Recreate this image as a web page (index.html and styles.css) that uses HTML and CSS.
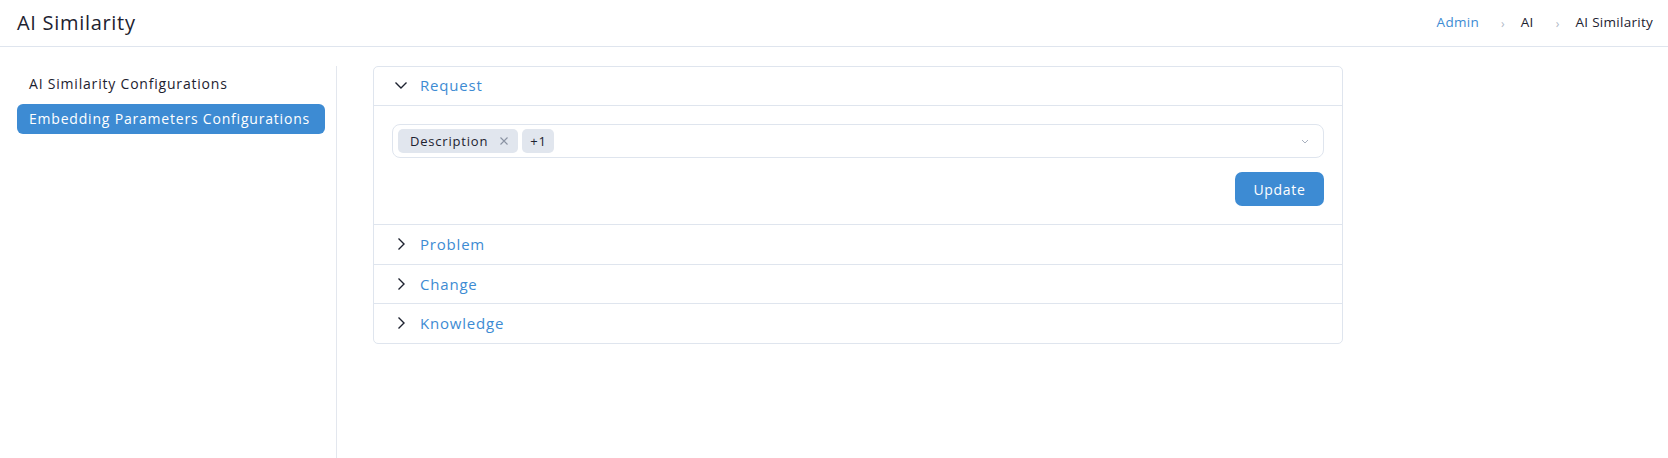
FILE: index.html
```html
<!DOCTYPE html>
<html>
<head>
<meta charset="utf-8">
<link rel="stylesheet" href="styles.css">
</head>
<body>
<header class="topbar">
  <h1 class="title">AI Similarity</h1>
  <nav class="crumbs">
    <a class="crumb link">Admin</a>
    <span class="sep">›</span>
    <span class="crumb">AI</span>
    <span class="sep">›</span>
    <span class="crumb">AI Similarity</span>
  </nav>
</header>
<div class="main">
  <aside class="side">
    <div class="side-item">AI Similarity Configurations</div>
    <div class="side-item active">Embedding Parameters Configurations</div>
  </aside>
  <section class="content">
    <div class="accordion">
      <div class="acc-item open">
        <div class="acc-head">
          <svg class="chev" width="14" height="14" viewBox="0 0 14 14"><path d="M1.5 4.5 L7 10 L12.5 4.5" fill="none" stroke="#1d2230" stroke-width="1.4"/></svg>
          <span class="acc-title">Request</span>
        </div>
        <div class="acc-body">
          <div class="select">
            <span class="tag">Description <svg class="x" width="10" height="10" viewBox="0 0 10 10"><path d="M1.5 1.5 L8.5 8.5 M8.5 1.5 L1.5 8.5" stroke="#8a93a3" stroke-width="1.1"/></svg></span>
            <span class="tag count">+1</span>
            <svg class="dd" width="10" height="10" viewBox="0 0 10 10"><path d="M2 4 L5 7 L8 4" fill="none" stroke="#a9b1bf" stroke-width="1"/></svg>
          </div>
          <div class="actions"><button class="btn">Update</button></div>
        </div>
      </div>
      <div class="acc-item">
        <div class="acc-head">
          <svg class="chev" width="14" height="14" viewBox="0 0 14 14"><path d="M4.5 1.5 L10 7 L4.5 12.5" fill="none" stroke="#1d2230" stroke-width="1.4"/></svg>
          <span class="acc-title">Problem</span>
        </div>
      </div>
      <div class="acc-item">
        <div class="acc-head">
          <svg class="chev" width="14" height="14" viewBox="0 0 14 14"><path d="M4.5 1.5 L10 7 L4.5 12.5" fill="none" stroke="#1d2230" stroke-width="1.4"/></svg>
          <span class="acc-title">Change</span>
        </div>
      </div>
      <div class="acc-item">
        <div class="acc-head">
          <svg class="chev" width="14" height="14" viewBox="0 0 14 14"><path d="M4.5 1.5 L10 7 L4.5 12.5" fill="none" stroke="#1d2230" stroke-width="1.4"/></svg>
          <span class="acc-title">Knowledge</span>
        </div>
      </div>
    </div>
  </section>
</div>
</body>
</html>
```
FILE: styles.css
```css
* { box-sizing: border-box; }
html, body { margin: 0; padding: 0; height: 100%; }
body {
  font-family: "Open Sans", "Liberation Sans", sans-serif;
  letter-spacing: 0.05em;
  color: #1d2230;
  background: #fff;
  display: flex;
  flex-direction: column;
}
.topbar {
  height: 47px;
  border-bottom: 1px solid #dfe5ee;
  display: flex;
  align-items: center;
  justify-content: space-between;
  padding: 0 15px 0 17px;
  flex: none;
}
.title {
  margin: 0 0 2px 0;
  font-size: 20px;
  font-weight: 500;
  letter-spacing: 0.7px;
}
.crumbs {
  display: flex;
  align-items: center;
  font-size: 13.5px;
  letter-spacing: 0.02em;
  margin-bottom: 3px;
}
.crumb { color: #1d2230; }
.crumb.link { color: #3d8bd3; }
.sep {
  color: #b0b8c6;
  font-size: 12px;
  margin: 3px 16px 0 22px;
}
.main {
  flex: 1;
  display: flex;
}
.side {
  width: 337px;
  border-right: 1px solid #e3e7ee;
  padding: 0 11px 0 17px;
  margin-top: 19px;
  flex: none;
}
.side-item {
  font-size: 14px;
  height: 30px;
  line-height: 30px;
  padding: 0 12px;
  border-radius: 6px;
  margin-bottom: 5px;
  white-space: nowrap;
}
.side-item:first-child { margin-top: 3px; }
.side-item.active {
  background: #3d8bd3;
  color: #fff;
}
.content {
  flex: 1;
  padding: 19px 0 0 36px;
}
.accordion {
  width: 970px;
  border: 1px solid #dfe5ee;
  border-radius: 5px;
}
.acc-item + .acc-item { border-top: 1px solid #dfe5ee; }
.acc-head {
  height: 38px;
  display: flex;
  align-items: center;
  padding-left: 20px;
}
.acc-item.open .acc-head { padding-bottom: 3px; }
.acc-item + .acc-item .acc-head { height: 38.5px; }
.chev { margin-right: 12px; }
.acc-title {
  color: #3d8bd3;
  font-size: 15px;
  font-weight: 500;
}
.acc-body {
  border-top: 1px solid #dfe5ee;
  padding: 18px 18px 18px 18px;
}
.select {
  height: 34px;
  border: 1px solid #dfe5ee;
  border-radius: 8px;
  display: flex;
  align-items: center;
  padding: 0 5px;
  gap: 4px;
}
.tag {
  height: 24px;
  background: #e1e6ee;
  border-radius: 5px;
  font-size: 13px;
  display: inline-flex;
  align-items: center;
  padding: 0 9px 0 12px;
}
.tag.count { padding: 0 7px 0 8px; }
.tag .x { margin-left: 11px; }
.dd { margin-left: auto; margin-right: 8px; }
.actions {
  display: flex;
  justify-content: flex-end;
  margin-top: 14px;
}
.btn {
  height: 34px;
  width: 89px;
  border: none;
  border-radius: 7px;
  background: #3d8bd3;
  color: #fff;
  font-family: inherit;
  letter-spacing: 0.05em;
  font-size: 14px;
  font-weight: 500;
}
```
